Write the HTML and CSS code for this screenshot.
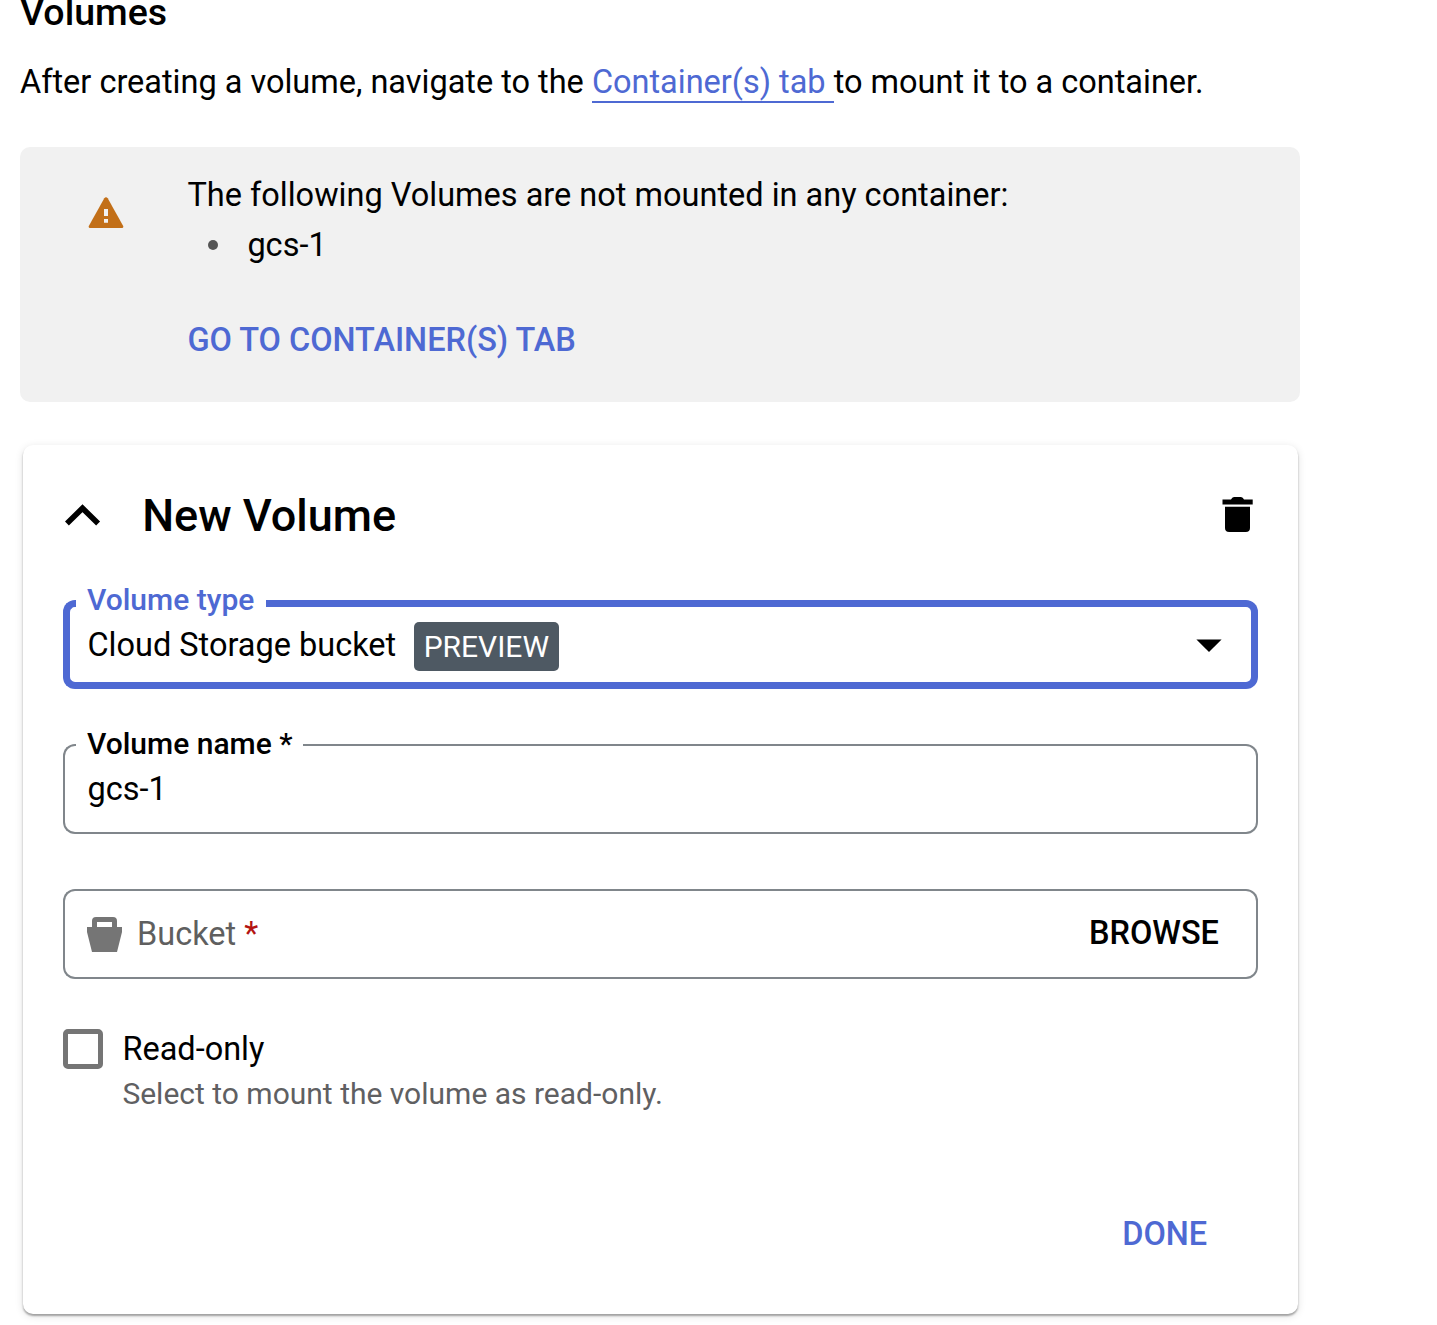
FILE: index.html
```html
<!DOCTYPE html>
<html lang="en">
<head>
<meta charset="utf-8">
<title>Volumes</title>
<link rel="stylesheet" href="styles.css">
</head>
<body>
<main class="page">
  <h2 class="page-title">Volumes</h2>
  <p class="intro">After creating a volume, navigate to the <a class="link" href="#">Container(s) tab </a>to mount it to a container.</p>

  <section class="banner">
    <svg class="banner-icon" width="36" height="32" viewBox="0 0 36 32">
      <path d="M16.3 1.2Q18 -.6 19.700 1.200L35.200 29Q35.700 31 34 31H2Q.3 31 .8 29Z" fill="#c26f18"/>
      <path d="M16 12h4v7h-4zM16 22h4v3.700h-4z" fill="#f1f1f1"/>
    </svg>
    <div class="banner-body">
      <p class="banner-text">The following Volumes are not mounted in any container:</p>
      <ul class="banner-list"><li class="banner-item">gcs-1</li></ul>
      <a class="action banner-action" href="#">GO TO CONTAINER(S) TAB</a>
    </div>
  </section>

  <section class="card">
    <header class="card-header">
      <svg width="36" height="22" viewBox="0 0 36 22"><path d="M1.900 19.500L17.500 4.200L33.100 19.500" fill="none" stroke="#000" stroke-width="5.600"/></svg>
      <h3 class="card-title">New Volume</h3>
      <svg class="trash" width="31" height="36" viewBox="0 0 31 36">
        <path d="M.5 2.500H9Q10 0 12 0H19Q21 0 22 2.500H30.700V7.600H.5ZM3 9.800H28V31Q28 35 23.800 35H7.200Q3 35 3 31Z"/>
      </svg>
    </header>

    <div class="field field-focused">
      <div class="outline">
        <span class="outline-start"></span>
        <span class="outline-notch notch-type"><label class="label">Volume type</label></span>
        <span class="outline-end"></span>
      </div>
      <div class="field-content">
        <span class="value value-type">Cloud Storage bucket</span>
        <span class="badge">PREVIEW</span>
        <svg class="arrow" width="26" height="14" viewBox="0 0 26 14"><path d="M.4.500H25.600L13 13Z"/></svg>
      </div>
    </div>

    <div class="field">
      <div class="outline">
        <span class="outline-start"></span>
        <span class="outline-notch notch-name"><label class="label">Volume name *</label></span>
        <span class="outline-end"></span>
      </div>
      <div class="field-content"><span class="value">gcs-1</span></div>
    </div>

    <div class="field field-bucket">
      <div class="outline">
        <span class="outline-start"></span>
        <span class="outline-end"></span>
      </div>
      <div class="field-content">
        <svg class="bucket-icon" width="35" height="35" viewBox="0 0 35 35">
          <path fill-rule="evenodd" d="M0 10H5V4Q5 0 9 0H26Q30 0 30 4V10H35V15L30 35H5L0 15ZM10 5V10H25V5Z" fill="#757575"/>
        </svg>
        <span class="placeholder">Bucket <span class="required">*</span></span>
        <span class="action browse">BROWSE</span>
      </div>
    </div>

    <div class="check-row">
      <span class="checkbox"></span>
      <div class="check-text">
        <p class="check-label">Read-only</p>
        <p class="hint">Select to mount the volume as read-only.</p>
      </div>
    </div>

    <footer class="card-footer"><a class="action" href="#">DONE</a></footer>
  </section>
</main>
</body>
</html>
```
FILE: styles.css
```css
* { box-sizing: border-box; margin: 0; padding: 0; }
html, body { height: 1325px; overflow: hidden; }
body {
  background: #fff;
  color: #000;
  font-family: Roboto, "Liberation Sans", sans-serif;
  font-size: 32.5px;
  line-height: 50px;
}
a { text-decoration: none; }
svg { display: block; flex: none; }
.page { width: 1280px; margin-left: 20px; display: flow-root; }
.page-title { margin: -13px 0 0; font-size: 37.5px; line-height: 50px; font-weight: 500; white-space: nowrap; }
.intro { margin-top: 20px; white-space: pre; letter-spacing: -0.01px; }
.link { color: #4e69d3; border-bottom: 2px solid #4e69d3; }

.banner {
  display: flex;
  height: 255px;
  margin-top: 40px;
  padding: 23px 0 0 68px;
  border-radius: 10px;
  background: #f1f1f1;
}
.banner-icon { margin: 27px 63.4px 0 0; }
.banner-body { display: flex; flex-direction: column; white-space: nowrap; }
.banner-list { list-style: none; padding-left: 20.6px; }
.banner-item { display: flex; align-items: center; gap: 29.4px; }
.banner-item::before { content: ""; width: 10px; height: 10px; border-radius: 50%; background: #555; }
.action { color: #4e69d3; font-weight: 500; white-space: nowrap; }
.banner-action { margin-top: 45px; letter-spacing: -0.02px; }

.card {
  display: flex;
  flex-direction: column;
  width: 1275px;
  height: 869px;
  margin: 43px 0 0 3px;
  padding: 40px 40px 0;
  border-radius: 10px;
  box-shadow: 0 2px 2px rgba(0, 0, 0, .32), 0 2px 8px rgba(0, 0, 0, .12);
}
.card-header { display: flex; align-items: center; height: 60px; padding-left: 2px; }
.card-title { margin: 2px 0 0 41.2px; font-size: 45px; line-height: 60px; font-weight: 500; white-space: nowrap; }
.trash { margin-left: auto; margin-right: 5px; }

.field { display: grid; height: 90px; margin-top: 55px; --line: 2px; --tone: #80868b; }
.field-focused { height: 89px; --line: 7px; --tone: #4e69d3; }
.outline, .field-content { grid-area: 1 / 1; }
.outline { display: flex; }
.outline-start, .outline-notch, .outline-end { border: 0 solid var(--tone); }
.outline-start { width: 13px; border-width: var(--line) 0 var(--line) var(--line); border-radius: 12px 0 0 12px; }
.outline-notch { border-bottom-width: var(--line); padding-left: 11px; }
.outline-end { flex: 1; border-width: var(--line) var(--line) var(--line) 0; border-radius: 0 12px 12px 0; }
.notch-type { width: 190px; }
.notch-name { width: 227px; }
.label { display: block; margin-top: -20px; font-size: 30px; line-height: 40px; font-weight: 500; white-space: nowrap; }
.field-focused .label { color: #4e69d3; }
.field-content { display: flex; align-items: center; padding: 0 36px 0 24.4px; white-space: nowrap; }
.badge { margin: 4px 0 0 17.6px; width: 145px; height: 49px; border-radius: 5px; background: #4e5963; color: #fff; font-size: 30px; line-height: 49px; text-align: center; }
.arrow { margin: 2px 0 0 auto; }
.bucket-icon { margin-right: 15px; margin-left: -0.4px; }
.placeholder { color: #5f5f5f; }
.required { color: #b31412; }
.browse { margin: -2px 3px 0 auto; color: #000; }

.check-row { display: flex; gap: 19.4px; margin-top: 45px; }
.checkbox { width: 40px; height: 40px; margin-top: 5px; border: 5px solid #757575; border-radius: 5px; }
.hint { margin-top: -3px; font-size: 30px; line-height: 45px; color: #5f6062; }
.card-footer { display: flex; justify-content: flex-end; margin-top: 93px; padding-right: 50.8px; }
```
